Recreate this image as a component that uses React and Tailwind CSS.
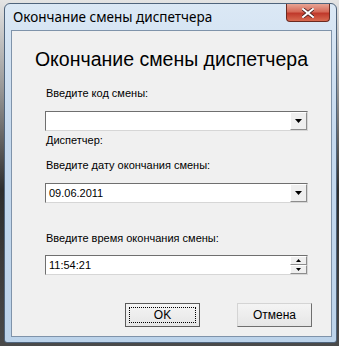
import React from "react";

const sans = { fontFamily: '"Liberation Sans", Arial, sans-serif' };

const Arrow = ({ up }) => (
  <svg width="7" height="4" viewBox="0 0 7 4">
    <path d={up ? "M0 4 L3.5 0 L7 4 Z" : "M0 0 L7 0 L3.5 4 Z"} fill="#000" />
  </svg>
);

const Field = ({ value, spin }) => (
  <div className="flex h-[20px] w-[263px] border border-t-[#6f6f6f] border-l-[#6f6f6f] border-r-[#d6d6d6] border-b-[#d6d6d6] bg-white">
    <div className="flex-1 pl-[3px] text-[11px] leading-[18px] text-black">{value}</div>
    {spin ? (
      <div className="flex w-[17px] flex-col">
        <div className="flex flex-1 items-center justify-center border border-t-white border-l-white border-r-[#8d8d8d] border-b-[#8d8d8d] bg-[#efefef]">
          <svg width="5" height="3" viewBox="0 0 5 3">
            <path d="M0 3 L2.5 0 L5 3 Z" fill="#000" />
          </svg>
        </div>
        <div className="flex flex-1 items-center justify-center border border-t-white border-l-white border-r-[#8d8d8d] border-b-[#8d8d8d] bg-[#efefef]">
          <svg width="5" height="3" viewBox="0 0 5 3">
            <path d="M0 0 L5 0 L2.5 3 Z" fill="#000" />
          </svg>
        </div>
      </div>
    ) : (
      <div className="flex w-[17px] items-center justify-center border border-t-white border-l-white border-r-[#8d8d8d] border-b-[#8d8d8d] bg-[#efefef]">
        <Arrow />
      </div>
    )}
  </div>
);

const Label = ({ children, className = "" }) => (
  <div className={`pl-[1px] text-[11px] leading-[13px] text-black ${className}`}>{children}</div>
);

export default function App() {
  return (
    <div
      className="h-[346px] w-[339px] overflow-hidden bg-[linear-gradient(to_bottom,#e4e4e4_0%,#9a9a9a_25%,#2e2e2e_55%,#4a4a4a_100%)] pl-[4px] pt-[3px]"
      style={sans}
    >
      <div className="flex h-[340px] w-[333px] flex-col rounded-t-[6px] rounded-b-[3px] border border-[#4f647c] bg-[linear-gradient(to_bottom,#dbe8f5_0%,#c5d9ee_40%,#bcd3ea_100%)]">
        {/* title bar */}
        <div className="flex h-[26px] items-start justify-between pl-[8px] pr-[6px]">
          <div
            className="mt-[4px] text-[13.5px] leading-[18px] text-black"
            style={{ fontFamily: '"Noto Sans", "Open Sans", sans-serif' }}
          >
            Окончание смены диспетчера
          </div>
          <div className="flex h-[18px] w-[44px] items-center justify-center rounded-b-[4px] border border-t-0 border-[#6b2a20] bg-[linear-gradient(to_bottom,#e8a494_0%,#d66a58_45%,#c0392b_55%,#d86a50_100%)]">
            <svg width="12" height="10" viewBox="0 0 12 10">
              <path d="M1 1 L11 9 M11 1 L1 9" stroke="#4a2020" strokeWidth="3.6" strokeLinecap="square" />
              <path d="M1 1 L11 9 M11 1 L1 9" stroke="#ffffff" strokeWidth="2" strokeLinecap="square" />
            </svg>
          </div>
        </div>

        {/* client area */}
        <div className="ml-[6px] mr-[4px] flex h-[307px] flex-col border border-[#7f93aa] bg-[#f0f0f0] pl-[33px]">
          <div className="mt-[16px] -ml-[33px] text-center text-[19.5px] leading-[24px] text-black">
            Окончание смены диспетчера
          </div>

          <Label className="mt-[16px]">Введите код смены:</Label>
          <div className="mt-[11px]">
            <Field value="" />
          </div>

          <Label className="mt-[3px]">Диспетчер:</Label>
          <Label className="mt-[12px]">Введите дату окончания смены:</Label>
          <div className="mt-[11px]">
            <Field value="09.06.2011" />
          </div>

          <Label className="mt-[29px]">Введите время окончания смены:</Label>
          <div className="mt-[10px]">
            <Field value="11:54:21" spin />
          </div>

          <div className="mt-[28px] flex w-[267px] justify-end gap-[37px]">
            <button className="flex h-[24px] w-[75px] items-center justify-center border border-[#5a5a5a] bg-[linear-gradient(to_bottom,#f4f4f4,#e6e6e6)] p-[3px]">
              <span className="flex h-full w-full items-center justify-center border border-dotted border-black text-[12px] leading-[14px] text-black">
                OK
              </span>
            </button>
            <button className="flex h-[24px] w-[75px] items-center justify-center border border-t-[#d4d4d4] border-l-[#d4d4d4] border-r-[#6f6f6f] border-b-[#6f6f6f] bg-[linear-gradient(to_bottom,#f4f4f4,#e6e6e6)] text-[12px] leading-[14px] text-black">
              Отмена
            </button>
          </div>
        </div>
      </div>
    </div>
  );
}
